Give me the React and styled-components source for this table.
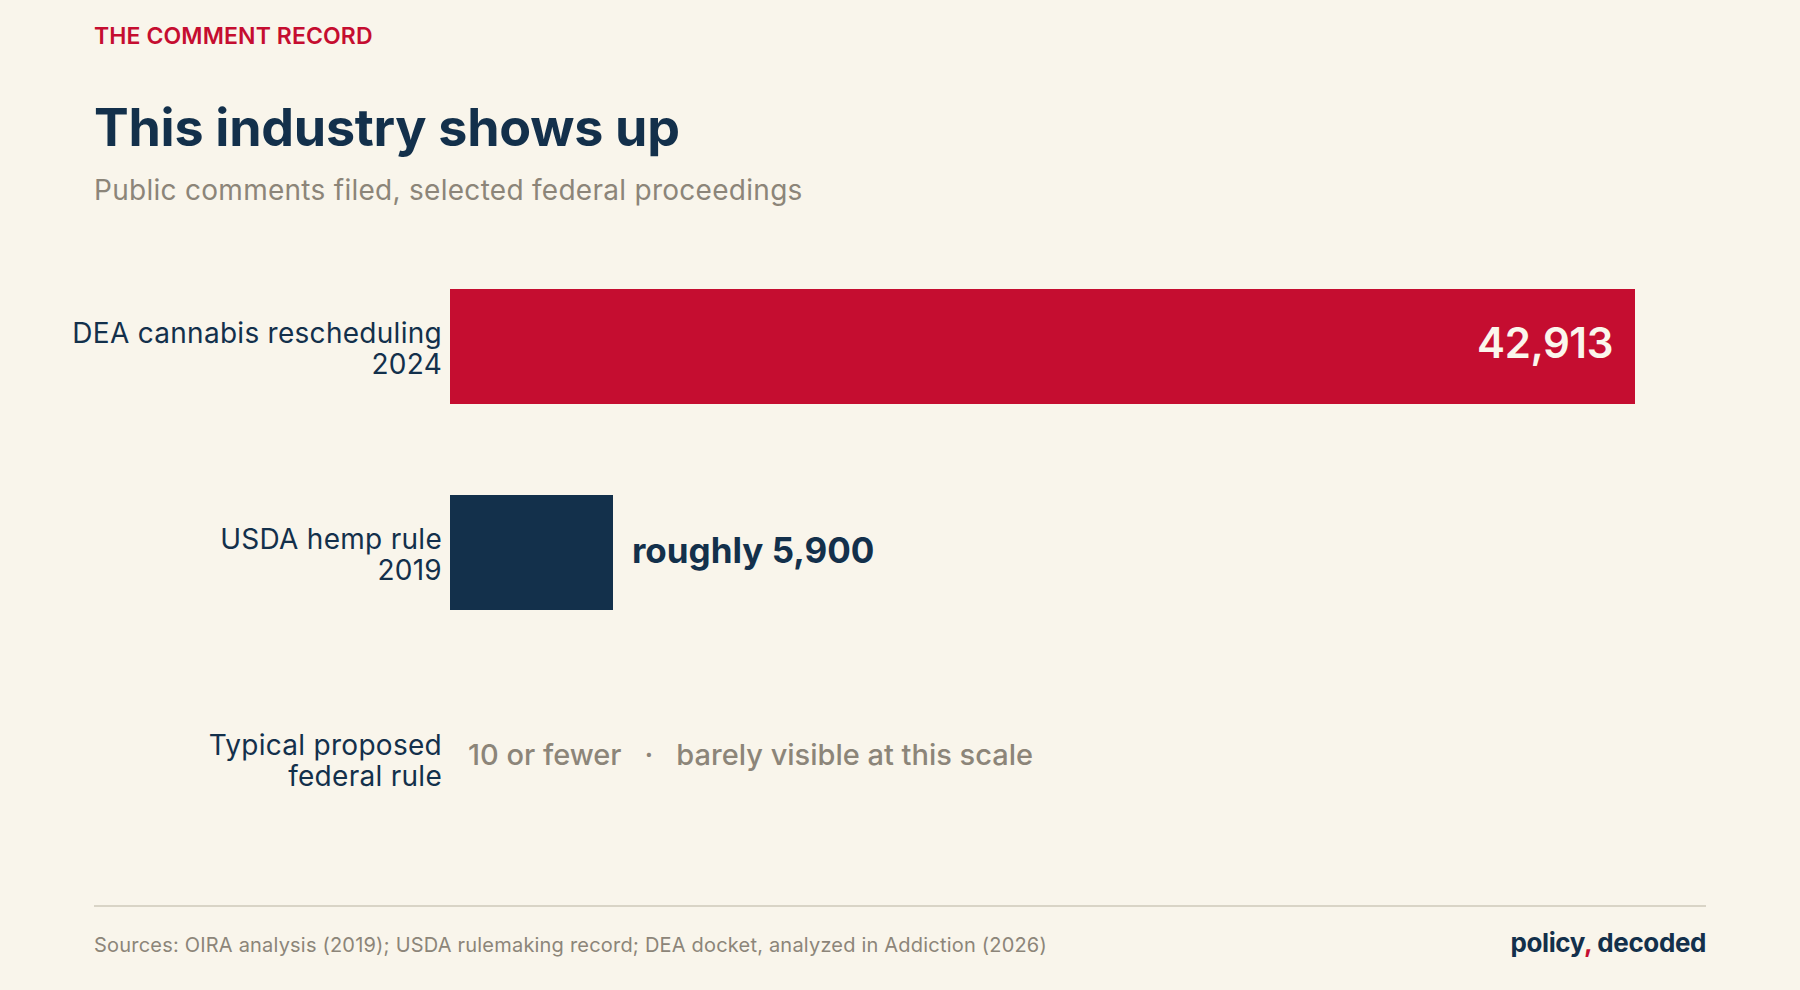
import React from 'react';
import styled, { createGlobalStyle } from 'styled-components';

const RED = '#c50d30';
const NAVY = '#13304b';
const MUTED = '#8c8579';

const GlobalStyle = createGlobalStyle`
  html, body {
    margin: 0;
    padding: 0;
    background: #f9f5eb;
  }
  body {
    font-family: Inter, "Noto Sans", sans-serif;
    -webkit-font-smoothing: antialiased;
  }
`;

const MAX = 42913;

const rows = [
   { label: ['DEA cannabis rescheduling', '2024'], value: 42913, text: '42,913', tone: 'red', inside: true },
   { label: ['USDA hemp rule', '2019'], value: 5900, text: 'roughly 5,900', tone: 'navy' },
   { label: ['Typical proposed', 'federal rule'], note: ['10 or fewer', 'barely visible at this scale'] },
];

const CommentRecord = () => {
   return (
      <Page>
         <GlobalStyle />
         <Eyebrow>THE COMMENT RECORD</Eyebrow>
         <Title>This industry shows up</Title>
         <Subtitle>Public comments filed, selected federal proceedings</Subtitle>

         <Chart>
            {rows.map(row => (
               <React.Fragment key={row.label[0]}>
                  <Label>
                     <span>{row.label[0]}</span>
                     <span>{row.label[1]}</span>
                  </Label>
                  <Track>
                     {row.note ? (
                        <Note>
                           {row.note[0]}
                           <Dot>·</Dot>
                           {row.note[1]}
                        </Note>
                     ) : (
                        <>
                           {/* bar width comes from the data */}
                           <Bar $tone={row.tone} style={{ width: `${(row.value / MAX) * 100}%` }}>
                              {row.inside && <InsideValue>{row.text}</InsideValue>}
                           </Bar>
                           {!row.inside && <OutsideValue>{row.text}</OutsideValue>}
                        </>
                     )}
                  </Track>
               </React.Fragment>
            ))}
         </Chart>

         <Footer>
            <Sources>
               Sources: OIRA analysis (2019); USDA rulemaking record; DEA docket, analyzed in Addiction (2026)
            </Sources>
            <Brand>
               policy<span>,</span> decoded
            </Brand>
         </Footer>
      </Page>
   );
};

const Page = styled.div`
   box-sizing: border-box;
   width: 1800px;
   height: 990px;
   padding: 23px 94px 32px;
   display: flex;
   flex-direction: column;
   background: #f9f5eb;
   overflow: hidden;
`;

const Eyebrow = styled.div`
   font-size: 23px;
   line-height: 1.2;
   font-weight: 600;
   color: ${RED};
   letter-spacing: 0.005em;
`;

const Title = styled.h1`
   margin: 48px 0 0;
   font-size: 52px;
   line-height: 1.1;
   font-weight: 700;
   color: ${NAVY};
   letter-spacing: -0.005em;
`;

const Subtitle = styled.p`
   margin: 18px 0 0;
   font-size: 28px;
   line-height: 1.2;
   font-weight: 400;
   color: ${MUTED};
   letter-spacing: 0.01em;
`;

const Chart = styled.div`
   margin-top: 82px;
   display: grid;
   grid-template-columns: 348px 1185px;
   grid-auto-rows: 115px;
   column-gap: 8px;
   row-gap: 91px;
`;

const Label = styled.div`
   align-self: center;
   padding-top: 4px;
   display: flex;
   flex-direction: column;
   align-items: flex-end;
   white-space: nowrap;
   font-size: 28px;
   line-height: 31px;
   font-weight: 400;
   color: ${NAVY};
   letter-spacing: 0.01em;
`;

const Track = styled.div`
   display: flex;
   align-items: center;
   height: 100%;
`;

const Bar = styled.div`
   box-sizing: border-box;
   height: 100%;
   flex: none;
   display: flex;
   align-items: center;
   justify-content: flex-end;
   padding: 0 22px 8px 0;
   background: ${p => (p.$tone === 'red' ? RED : NAVY)};
`;

const InsideValue = styled.span`
   font-size: 42px;
   font-weight: 600;
   color: #fbf6ec;
   letter-spacing: -0.01em;
`;

const OutsideValue = styled.span`
   margin: 0 0 6px 19px;
   font-size: 35px;
   font-weight: 700;
   color: ${NAVY};
`;

const Note = styled.div`
   margin-bottom: 8px;
   padding-left: 18px;
   font-size: 29px;
   font-weight: 500;
   color: ${MUTED};
`;

const Dot = styled.span`
   margin: 0 23px;
`;

const Footer = styled.footer`
   margin-top: auto;
   border-top: 2px solid #d9d4c6;
   padding-top: 20px;
   display: flex;
   align-items: baseline;
   justify-content: space-between;
`;

const Sources = styled.div`
   font-size: 20px;
   line-height: 1.3;
   color: ${MUTED};
   letter-spacing: 0.01em;
`;

const Brand = styled.div`
   font-size: 26px;
   line-height: 1.2;
   font-weight: 700;
   color: ${NAVY};
   letter-spacing: -0.015em;
   span {
      color: ${RED};
   }
`;

export default function App() {
   return <CommentRecord />;
}
